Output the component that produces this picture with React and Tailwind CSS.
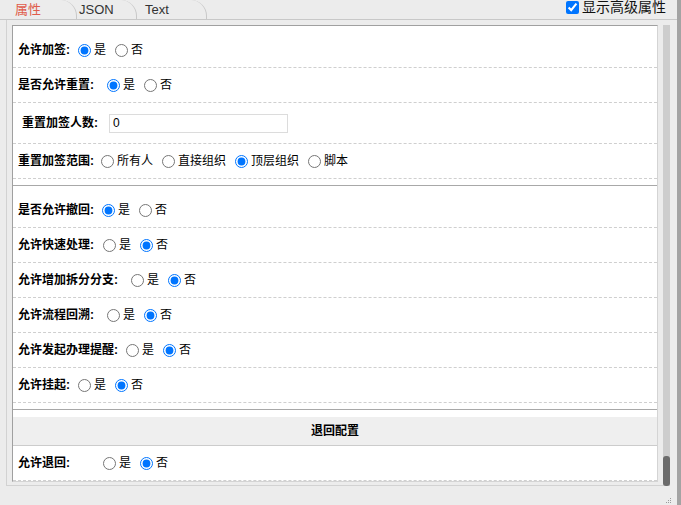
import React from "react";

const FONT = "font-['Liberation_Sans','Noto_Sans_CJK_SC',sans-serif]";

const YES_NO = ["是", "否"];

const topRows = [
  { name: "jq", label: "允许加签:", w: "w-[60px]", options: YES_NO, value: "是" },
  { name: "cz", label: "是否允许重置:", w: "w-[89px]", options: YES_NO, value: "是" },
];

const midRows = [
  { name: "ch", label: "是否允许撤回:", w: "w-[84px]", options: YES_NO, value: "是" },
  { name: "ks", label: "允许快速处理:", w: "w-[85px]", options: YES_NO, value: "否" },
  { name: "cf", label: "允许增加拆分分支:", w: "w-[113px]", options: YES_NO, value: "否" },
  { name: "hs", label: "允许流程回溯:", w: "w-[89px]", options: YES_NO, value: "否" },
  { name: "tx", label: "允许发起办理提醒:", w: "w-[108px]", options: YES_NO, value: "否" },
  { name: "gq", label: "允许挂起:", w: "w-[60px]", options: YES_NO, value: "否" },
];

const Radio = ({ name, label, checked }) => (
  <label className="flex items-center">
    <input type="radio" name={name} defaultChecked={checked} className="m-0 h-[13px] w-[13px]" />
    <span className="ml-[3px]">{label}</span>
  </label>
);

const RadioRow = ({ name, label, w, options, value }) => (
  <div className="flex h-[35px] items-center border-b border-dashed border-[#cfcfcf] pl-[5px]">
    <span className={`${w} shrink-0 font-bold`}>{label}</span>
    <div className="flex items-center gap-[9px]">
      {options.map((o) => (
        <Radio key={o} name={name} label={o} checked={o === value} />
      ))}
    </div>
  </div>
);

const App = () => {
  return (
    <div className={`flex h-[505px] w-[681px] overflow-hidden bg-[#ececec] text-[12px] leading-[16px] text-black ${FONT}`}>
      <div className="flex w-[677px] flex-col">
        {/* tabs + advanced toggle */}
        <div className="flex h-[20px] shrink-0 justify-between border-b border-[#c8c8c8]">
          <div className="flex text-[13px]">
            <div className="flex w-[77px] items-center rounded-tr-[16px] border-r border-[#c8c8c8] pl-[15px] text-[#e05c4b]">
              属性
            </div>
            <div className="flex w-[60px] items-center rounded-tr-[16px] border-r border-[#c8c8c8] pl-[2px] text-[#333]">
              JSON
            </div>
            <div className="flex w-[70px] items-center rounded-tr-[16px] border-r border-[#c8c8c8] pl-[8px] text-[#333]">
              Text
            </div>
          </div>
          <label className="flex h-[15px] items-center gap-[3px] pr-[11px] text-[14px] leading-[15px] text-[#111]">
            <input type="checkbox" defaultChecked className="m-0 h-[13px] w-[13px]" />
            显示高级属性
          </label>
        </div>

        <div className="flex pl-[6px]">
          {/* outer frame */}
          <div className="w-[657px] border-b border-l border-[#d2d2d2] px-[5px] pt-[5px] pb-[3px]">
            <div className="border border-t-[#a0a0a0] border-l-[#a0a0a0] border-r-[#d4d4d4] border-b-[#d4d4d4] bg-white">
              {/* section 1 */}
              <div className="border-b border-[#a8a8a8] pt-[7px] pb-[6px]">
                {topRows.map((r) => (
                  <RadioRow key={r.name} {...r} />
                ))}
                <div className="flex h-[41px] items-center border-b border-dashed border-[#cfcfcf] pl-[9px]">
                  <span className="w-[87px] shrink-0 font-bold">重置加签人数:</span>
                  <div className="flex h-[19px] w-[179px] items-center border border-[#dcdcdc] px-[3px]">0</div>
                </div>
                <RadioRow
                  name="fw"
                  label="重置加签范围:"
                  w="w-[83px]"
                  options={["所有人", "直接组织", "顶层组织", "脚本"]}
                  value="顶层组织"
                />
              </div>

              {/* section 2 */}
              <div className="border-b border-[#a8a8a8] pt-[7px] pb-[6px]">
                {midRows.map((r) => (
                  <RadioRow key={r.name} {...r} />
                ))}
              </div>

              {/* section 3 */}
              <div className="pt-[7px]">
                <div className="flex h-[29px] items-center justify-center border-b border-[#cccccc] bg-[#efefef] font-bold">
                  退回配置
                </div>
                <RadioRow name="th" label="允许退回:" w="w-[85px]" options={YES_NO} value="否" />
              </div>
            </div>
          </div>

          {/* scrollbar */}
          <div className="mt-[5px] flex h-[461px] w-[7px] flex-col justify-end bg-[#cdcdcd]">
            <div className="h-[30px] rounded-[3px] bg-[#6b6b6b]" />
          </div>
        </div>

        {/* resize grip */}
        <div className="ml-[665px] mt-[11px]">
          <svg width="7" height="7" viewBox="0 0 7 7" fill="#9a9a9a">
            <rect x="5" y="1" width="1" height="1" />
            <rect x="3" y="3" width="1" height="1" />
            <rect x="5" y="3" width="1" height="1" />
            <rect x="1" y="5" width="1" height="1" />
            <rect x="3" y="5" width="1" height="1" />
            <rect x="5" y="5" width="1" height="1" />
          </svg>
        </div>
      </div>
      <div className="w-[4px] bg-[#a3a3a3]" />
    </div>
  );
};

export default App;
